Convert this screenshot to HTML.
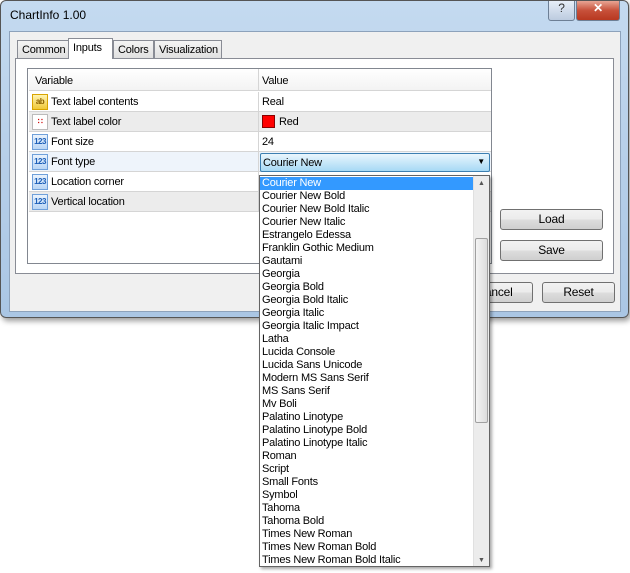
<!DOCTYPE html>
<html><head><style>
*{box-sizing:border-box;margin:0;padding:0}
body{width:630px;height:573px;background:#fff;position:relative;overflow:hidden;font-family:"Liberation Sans",sans-serif;font-size:11px;color:#000;letter-spacing:-0.2px}
.win{position:absolute;left:0;top:0;width:629px;height:318px;border:1px solid #555;border-radius:6px;background:linear-gradient(#c4daf0,#b9d1ea 40%,#aac6e4);box-shadow:2px 3px 6px rgba(0,0,0,.4)}
.title{position:absolute;left:9px;top:7px;font-size:12px;letter-spacing:0}
.tb{position:absolute;top:0;height:20px;border:1px solid #6d7f95;border-top:none;border-radius:0 0 3px 3px}
.client{position:absolute;left:8px;top:30px;width:612px;height:281px;background:#f0f0f0;border:1px solid #8da2bb}
.panel{position:absolute;left:15px;top:58px;width:599px;height:216px;background:#fff;border:1px solid #898c95}
.tab{position:absolute;top:40px;height:19px;border:1px solid #898c95;background:linear-gradient(#f4f4f4,#e0e0e0);padding:3px 0 0 4px;font-size:11px;white-space:nowrap;overflow:hidden}
.grid{position:absolute;left:27px;top:68px;width:465px;height:196px;border:1px solid #828790;background:#fff}
.row{position:absolute;left:1px;width:462px;height:20px;border-bottom:1px solid #d5d5d5}
.row .n{position:absolute;left:22px;top:4px}
.row .v{position:absolute;left:233px;top:4px}
.row .sep{position:absolute;left:229px;top:0;width:1px;height:20px;background:#d5d5d5}
.ic{position:absolute;left:3px;top:2px;width:16px;height:16px;font-size:8px;color:#1c5fb8;border:1px solid #6fa0da;background:linear-gradient(#eaf3fd,#b9d6f5);line-height:14px;text-align:center;font-weight:bold;letter-spacing:-0.5px}
.btn{position:absolute;height:21px;border:1px solid #707070;border-radius:3px;background:linear-gradient(#f2f2f2,#ebebeb 50%,#dddddd 51%,#cfcfcf);text-align:center;line-height:19px;font-size:12px}
.dd{position:absolute;left:259px;top:175px;width:231px;height:392px;border:1px solid #646464;background:#fff;box-shadow:2px 2px 3px rgba(0,0,0,.35)}
.it{height:13px;line-height:13px;padding-left:2px;font-size:11px;white-space:nowrap}
.sb{position:absolute;right:0;top:0;width:16px;height:390px;background:#ececec;border-left:1px solid #e0e0e0}
</style></head><body>
<div class="win">
 <div class="title">ChartInfo 1.00</div>
 <div class="tb" style="left:547px;width:27px;background:linear-gradient(#e6eef8,#bccbdf);text-align:center;font-size:12px;color:#333">?</div>
 <div class="tb" style="left:575px;width:44px;background:linear-gradient(#e8a594,#c7503a 50%,#b83820);text-align:center;color:#fff;font-weight:bold;font-size:12px">✕</div>
 <div class="client"></div>
</div>
<div class="panel"></div>
<div class="tab" style="left:17px;width:52px">Common</div>
<div class="tab" style="left:68px;top:38px;height:21px;width:45px;background:#fff;border-bottom:none">Inputs</div>
<div class="tab" style="left:113px;width:41px">Colors</div>
<div class="tab" style="left:154px;width:68px">Visualization</div>
<div class="grid">
 <div class="row" style="top:0;height:22px;background:linear-gradient(#fff,#f3f3f3)"><span class="n" style="left:6px;top:6px">Variable</span><div class="sep" style="height:22px"></div><span class="v" style="top:6px">Value</span></div>
 <div class="row" style="top:23px"><div class="ic" style="border-color:#d9a400;background:linear-gradient(#fff3b0,#f0c838);color:#8a6000">ab</div><span class="n">Text label contents</span><div class="sep"></div><span class="v">Real</span></div>
 <div class="row" style="top:43px;background:#ececec"><div class="ic" style="background:#fff;border-color:#bbb;color:#c00">∷</div><span class="n">Text label color</span><div class="sep"></div><span class="v" style="left:233px;top:3px;width:13px;height:13px;background:#f00;border:1px solid #800"></span><span class="v" style="left:250px">Red</span></div>
 <div class="row" style="top:63px"><div class="ic">123</div><span class="n">Font size</span><div class="sep"></div><span class="v">24</span></div>
 <div class="row" style="top:83px;background:#eef4fb"><div class="ic">123</div><span class="n">Font type</span><div class="sep"></div>
  <div style="position:absolute;left:231px;top:1px;width:230px;height:19px;border:1px solid #3c7fb1;background:linear-gradient(#eaf6fd,#a7d9f5);border-radius:2px"><span style="position:absolute;left:2px;top:3px">Courier New</span><span style="position:absolute;right:4px;top:3px;font-size:8px">▼</span></div></div>
 <div class="row" style="top:103px"><div class="ic">123</div><span class="n">Location corner</span><div class="sep"></div></div>
 <div class="row" style="top:123px;background:#ececec"><div class="ic">123</div><span class="n">Vertical location</span><div class="sep"></div></div>
</div>
<div class="btn" style="left:500px;top:209px;width:103px">Load</div>
<div class="btn" style="left:500px;top:240px;width:103px">Save</div>
<div class="btn" style="left:456px;top:282px;width:77px">Cancel</div>
<div class="btn" style="left:542px;top:282px;width:73px">Reset</div>
<div class="dd">
 <div class="sb"><div style="position:absolute;left:4px;top:4px;font-size:7px;color:#555">▲</div><div style="position:absolute;left:1px;top:62px;width:13px;height:185px;border:1px solid #a0a0a0;border-radius:2px;background:linear-gradient(90deg,#f4f4f4,#dcdcdc)"></div><div style="position:absolute;left:4px;bottom:2px;font-size:7px;color:#555">▼</div></div>
 <div style="width:214px;padding-top:1px">
 <div class="it" style="background:#3399ff;color:#fff">Courier New</div>
 <div class="it">Courier New Bold</div><div class="it">Courier New Bold Italic</div><div class="it">Courier New Italic</div><div class="it">Estrangelo Edessa</div><div class="it">Franklin Gothic Medium</div><div class="it">Gautami</div><div class="it">Georgia</div><div class="it">Georgia Bold</div><div class="it">Georgia Bold Italic</div><div class="it">Georgia Italic</div><div class="it">Georgia Italic Impact</div><div class="it">Latha</div><div class="it">Lucida Console</div><div class="it">Lucida Sans Unicode</div><div class="it">Modern MS Sans Serif</div><div class="it">MS Sans Serif</div><div class="it">Mv Boli</div><div class="it">Palatino Linotype</div><div class="it">Palatino Linotype Bold</div><div class="it">Palatino Linotype Italic</div><div class="it">Roman</div><div class="it">Script</div><div class="it">Small Fonts</div><div class="it">Symbol</div><div class="it">Tahoma</div><div class="it">Tahoma Bold</div><div class="it">Times New Roman</div><div class="it">Times New Roman Bold</div><div class="it">Times New Roman Bold Italic</div>
 </div>
</div>
</body></html>
